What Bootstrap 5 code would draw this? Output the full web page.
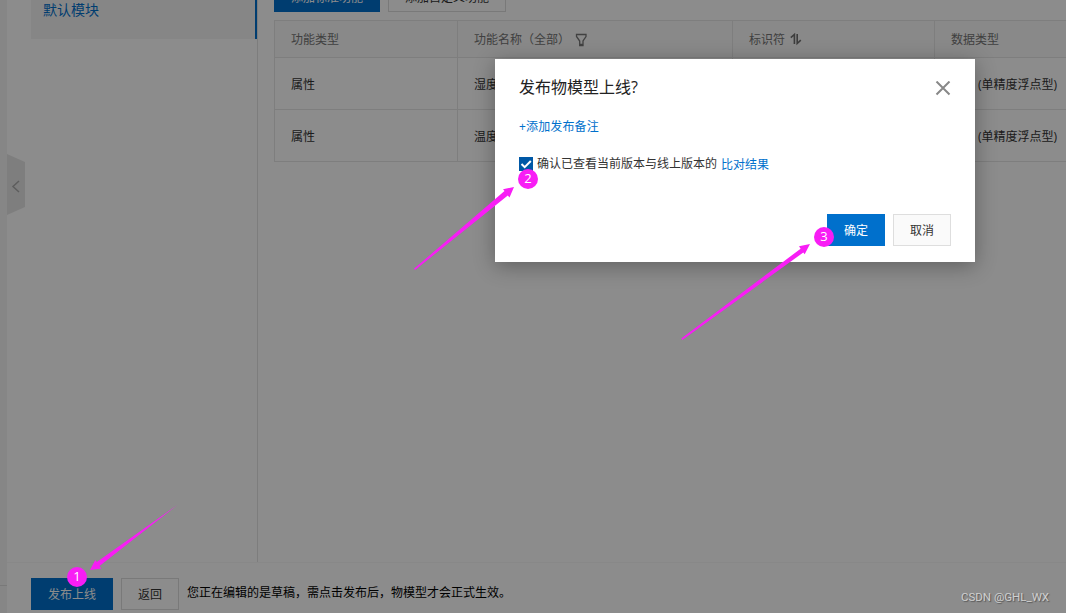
<!DOCTYPE html>
<html lang="zh-CN">
<head>
<meta charset="utf-8">
<meta name="viewport" content="width=device-width, initial-scale=1">
<title>发布物模型上线</title>
<link rel="stylesheet" href="https://cdn.jsdelivr.net/npm/bootstrap@5.3.0/dist/css/bootstrap.min.css">
<style>
  body { font-family: "Open Sans", "Noto Sans CJK SC", sans-serif; font-size: 12px; line-height: 18px; color: #333; height: 613px; overflow: hidden; background: #fff; }
  .page { height: 613px; }
  .rail { width: 7px; background: #f5f5f5; }
  .rail-line { height: 586px; border-bottom: 1px solid #ddd; }
  .side { width: 251px; border-right: 1px solid #e3e3e3; padding-left: 24px; }
  .side-item { height: 39px; background: #f5f5f5; border-right: 2px solid #0070cc; color: #0070cc; font-size: 14px; line-height: 20px; padding-left: 12px; }
  .fold { left: 7px; top: 154px; width: 18px; height: 61px; }
  .main-area { padding-left: 16px; }
  .toolbar { margin-top: -20px; margin-bottom: 8px; }
  .btn { --bs-btn-border-radius: 0; --bs-btn-font-size: 12px; --bs-btn-padding-y: 0; --bs-btn-padding-x: 0; height: 32px; line-height: 32px; flex: none; }
  .toolbar .btn { line-height: 34px; }
  .btn-primary { --bs-btn-bg: #0070cc; --bs-btn-border-color: #0070cc; }
  .btn-plain { --bs-btn-bg: #fafafa; --bs-btn-color: #333; --bs-btn-border-color: #dedede; }
  .page .btn-plain { --bs-btn-bg: transparent; --bs-btn-border-color: #dcdcdc; }
  .w-58 { width: 58px; } .w-82 { width: 82px; } .w-106 { width: 106px; } .w-118 { width: 118px; }
  .props { width: 811px; table-layout: fixed; border-collapse: separate; border-spacing: 0; border-top: 1px solid #e6e6e6; color: #333; white-space: nowrap; }
  .props th, .props td { border-left: 1px solid #e6e6e6; border-bottom: 1px solid #e6e6e6; padding: 2px 0 0 16px; vertical-align: middle; overflow: hidden; }
  .props th { height: 37px; font-weight: 400; color: #757575; background: #f9f9f9; }
  .props td { height: 52px; }
  .type-name { display: inline-block; width: 27px; letter-spacing: -.8px; }
  .footer-bar { height: 51px; border-top: 1px solid #f7f7f7; padding: 15px 0 0 24px; }
  .hint { color: #000; line-height: 30px; }
  .veil { background: rgba(0,0,0,.45); }
  .dialog-box { left: 495px; top: 59px; width: 480px; height: 203px; background: #fff; padding: 16px 24px; box-shadow: 0 4px 20px rgba(0,0,0,.32); }
  .dialog-title { font-size: 16px; line-height: 24px; color: #222; }
  .link-blue { color: #0070cc; text-decoration: none; }
  .tick { width: 14px; height: 14px; background: #0058a6; }
  .note-row { margin-top: 19px; letter-spacing: .15px; }
  .confirm-row { margin-top: 18px; height: 20px; }
  .compare-link { padding-top: 2px; }
  .pin { width: 20px; height: 20px; border-radius: 50%; background: #f81df5; color: #fff; font-size: 13px; line-height: 19px; text-align: center; font-family: "Open Sans", sans-serif; }
  .watermark { left: 961px; top: 589px; font: 11.5px/16px Roboto, sans-serif; color: #d0d0d0; text-shadow: 1px 1px 1px #555; white-space: nowrap; }
</style>
</head>
<body>
<div class="page d-flex">
  <div class="rail flex-shrink-0"><div class="rail-line"></div></div>
  <div class="d-flex flex-column flex-grow-1 overflow-hidden">
    <div class="d-flex flex-grow-1 overflow-hidden">
      <aside class="side flex-shrink-0"><div class="side-item">默认模块</div></aside>
      <main class="main-area flex-grow-1 overflow-hidden">
        <div class="toolbar d-flex gap-2">
          <button class="btn btn-primary w-106">添加标准功能</button>
          <button class="btn btn-plain w-118">添加自定义功能</button>
        </div>
        <table class="props">
          <colgroup><col style="width:183px"><col style="width:275px"><col style="width:202px"><col></colgroup>
          <thead><tr>
            <th>功能类型</th>
            <th><div class="d-flex align-items-center"><span>功能名称（全部）</span><svg class="ms-1" width="14" height="14" viewBox="0 0 14 14" fill="none" stroke="#777" stroke-width="1.3"><path d="M2.500 1.500h9.500v2L9 8v4.700H5.700V8L2.500 3.500zM5.700 11.500H9"/></svg></div></th>
            <th><div class="d-flex align-items-center"><span>标识符</span><svg class="ms-1" width="14" height="14" viewBox="0 0 14 14" fill="none" stroke="#707070" stroke-width="1.6"><path d="M1.800 4.700 5.400 1.500v9.500M8.200 1v9.500l3.600-3.400"/></svg></div></th>
            <th>数据类型</th>
          </tr></thead>
          <tbody>
            <tr><td>属性</td><td>湿度</td><td></td><td><span class="type-name">float</span>(单精度浮点型)</td></tr>
            <tr><td>属性</td><td>温度</td><td></td><td><span class="type-name">float</span>(单精度浮点型)</td></tr>
          </tbody>
        </table>
      </main>
    </div>
    <footer class="footer-bar d-flex gap-2 flex-shrink-0">
      <button class="btn btn-primary w-82">发布上线</button>
      <button class="btn btn-plain w-58">返回</button>
      <span class="hint">您正在编辑的是草稿，需点击发布后，物模型才会正式生效。</span>
    </footer>
  </div>
</div>
<svg class="fold position-absolute" viewBox="0 0 18 61"><path d="M0 0 18 8v45L0 61z" fill="#e6e6e6"/><path d="m12 27-6 5.500 6 5.500" fill="none" stroke="#aaa" stroke-width="1.500"/></svg>
<div class="veil position-absolute top-0 start-0 w-100 h-100"></div>

<section class="dialog-box position-absolute d-flex flex-column" role="dialog">
  <div class="d-flex justify-content-between align-items-center">
    <div class="dialog-title">发布物模型上线?</div>
    <svg class="mt-1" width="16" height="16" viewBox="0 0 16 16" stroke="#888" stroke-width="2"><path d="m1.500 .5 13 13M14.500 .5l-13 13"/></svg>
  </div>
  <div class="note-row"><a class="link-blue" href="#">+添加发布备注</a></div>
  <div class="confirm-row d-flex align-items-center">
    <span class="tick d-flex"><svg width="14" height="14" viewBox="0 0 14 14" fill="none" stroke="#fff" stroke-width="2"><path d="m2.500 7 3.200 3.200L11.800 4"/></svg></span>
    <span class="ms-1">确认已查看当前版本与线上版本的</span>
    <a class="link-blue compare-link ms-1" href="#">比对结果</a>
  </div>
  <div class="mt-auto d-flex gap-2 justify-content-end">
    <button class="btn btn-primary w-58">确定</button>
    <button class="btn btn-plain w-58">取消</button>
  </div>
</section>

<!-- step arrows and numbered markers laid over the page -->
<svg class="position-absolute top-0 start-0 pe-none" width="1066" height="613" fill="#f81df5">
  <path d="M414 268.800 504.500 191 503 189.200 514 187 509.500 197.500 507.800 195.500 415 270z"/>
  <path d="M681.300 338.600 800.600 248.700 799 246.300 810 244 804.700 254.200 803.300 252.500 682.300 340z"/>
  <path d="M177 505.200 96.800 562 95.300 560 90 570 101.300 568.500 99.500 566z"/>
</svg>
<div class="pin position-absolute" style="left:67px;top:567px">1</div>
<div class="pin position-absolute" style="left:518px;top:169px">2</div>
<div class="pin position-absolute" style="left:814px;top:227px">3</div>
<div class="watermark position-absolute">CSDN @GHL_WX</div>
<script src="https://cdn.jsdelivr.net/npm/bootstrap@5.3.0/dist/js/bootstrap.bundle.min.js"></script>
</body>
</html>
